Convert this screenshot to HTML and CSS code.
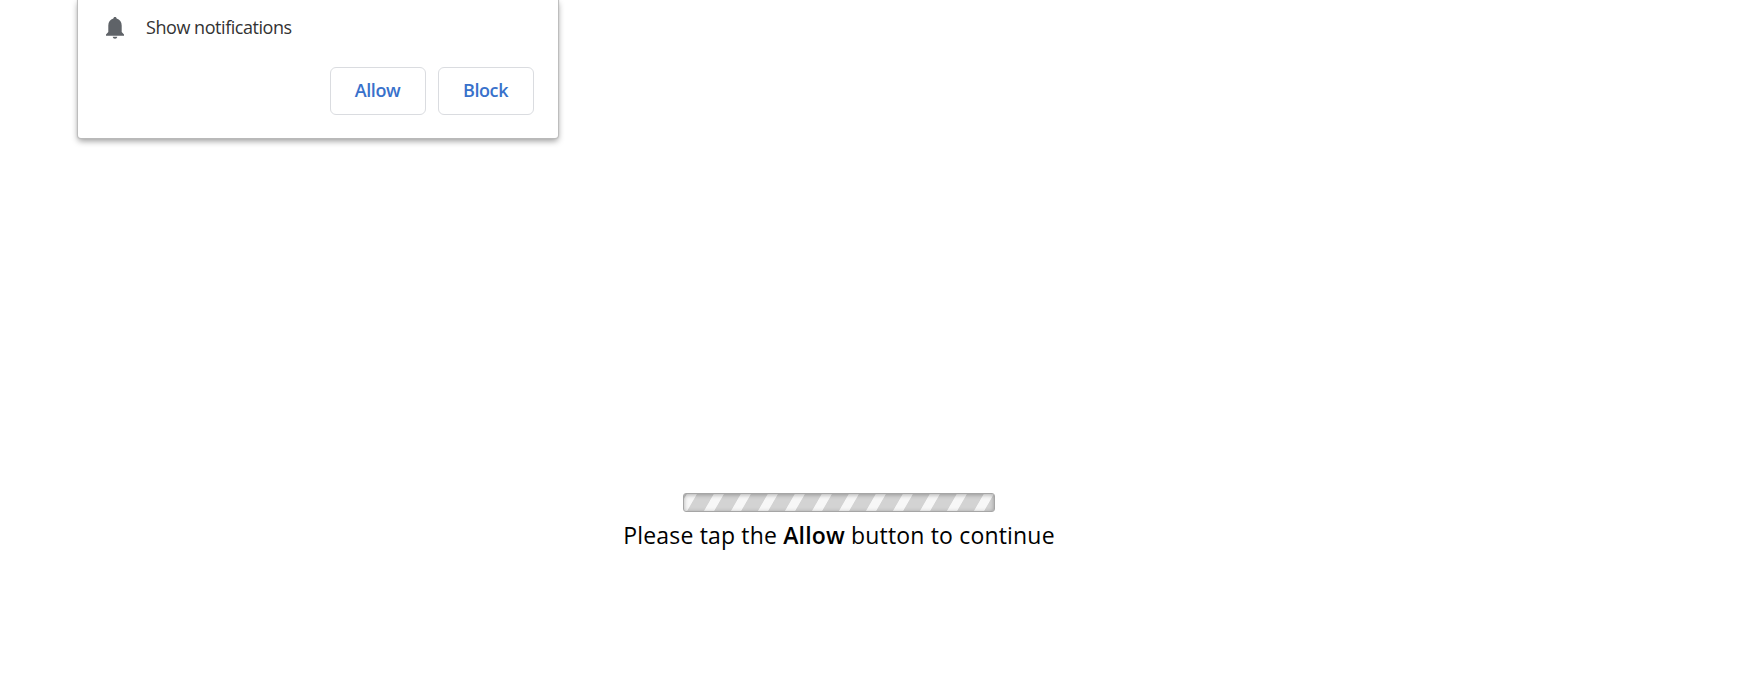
FILE: index.html
```html
<!DOCTYPE html>
<html lang="en">
<head>
    <meta charset="UTF-8">
    <meta name="viewport" content="width=device-width, initial-scale=1.0">
    <title>Show notifications</title>
    <link rel="stylesheet" href="styles.css">
</head>
<body>
    <div class="popup">
        <div class="popup-row">
            <svg class="bell" viewBox="0 0 18 22">
                <path d="M9 0C7.900 0 7.400.7 7.400 1.600C4.200 2.300 2.300 5 2.300 8.500v6.500L0 17.500v1.200h18v-1.200l-2.300-2.500V8.500c0-3.500-1.900-6.200-5.100-6.900C10.600.7 10.100 0 9 0zM6.700 19.800c.2 1.300 1.100 2 2.300 2s2.100-.7 2.300-2z"/>
            </svg>
            <span class="popup-text">Show notifications</span>
        </div>
        <div class="popup-buttons">
            <button class="allow">Allow</button>
            <button class="block">Block</button>
        </div>
    </div>

    <main class="content">
        <div class="progress"></div>
        <p class="message">Please tap the <b>Allow</b> button to continue</p>
    </main>
</body>
</html>
```

FILE: styles.css
```css
body {
    margin: 0;
    background: #fff;
    font-family: "Open Sans", "Noto Sans", sans-serif;
    overflow: hidden;
}

.popup {
    box-sizing: border-box;
    width: 480px;
    height: 138px;
    margin-left: 78px;
    padding: 16px 24px 0 28px;
    background: #fff;
    border-radius: 0 0 3px 3px;
    box-shadow: 0 0 1px 1px #bbb, 0 3px 6px rgba(0, 0, 0, 0.4);
}

.popup-row {
    display: flex;
    align-items: center;
    height: 24px;
}

.bell {
    width: 18px;
    height: 22px;
    fill: #5f6368;
}

.popup-text {
    margin-left: 22px;
    padding-bottom: 2px;
    font-size: 18px;
    line-height: 24px;
    letter-spacing: -0.45px;
    color: #333;
}

.popup-buttons {
    display: flex;
    justify-content: flex-end;
    gap: 12px;
    margin-top: 27px;
}

.popup-buttons button {
    width: 96px;
    height: 48px;
    padding: 0 1px 2px 0;
    background: #fff;
    border: 1px solid #dadce0;
    border-radius: 6px;
    font-family: inherit;
    font-size: 18px;
    font-weight: 600;
    letter-spacing: -0.4px;
    color: #3871cb;
}

.content {
    width: 1678px;
    padding-top: 355px;
    text-align: center;
}

.progress {
    box-sizing: border-box;
    width: 312px;
    height: 19px;
    margin: 0 auto;
    border: 1px solid #a6a6a6;
    border-radius: 3px;
    background: repeating-linear-gradient(120deg, #d3d3d3 0, #d3d3d3 2px, #f7f7f7 2.8px, #f7f7f7 10.8px, #d3d3d3 11.6px, #d3d3d3 23.38px);
    box-shadow: inset 0 1px 4px rgba(0, 0, 0, 0.3);
}

.message {
    margin: 7px 0 0;
    font-size: 23px;
    line-height: 32px;
    letter-spacing: 0.17px;
    color: #000;
}

.message b {
    font-weight: 600;
}
```
